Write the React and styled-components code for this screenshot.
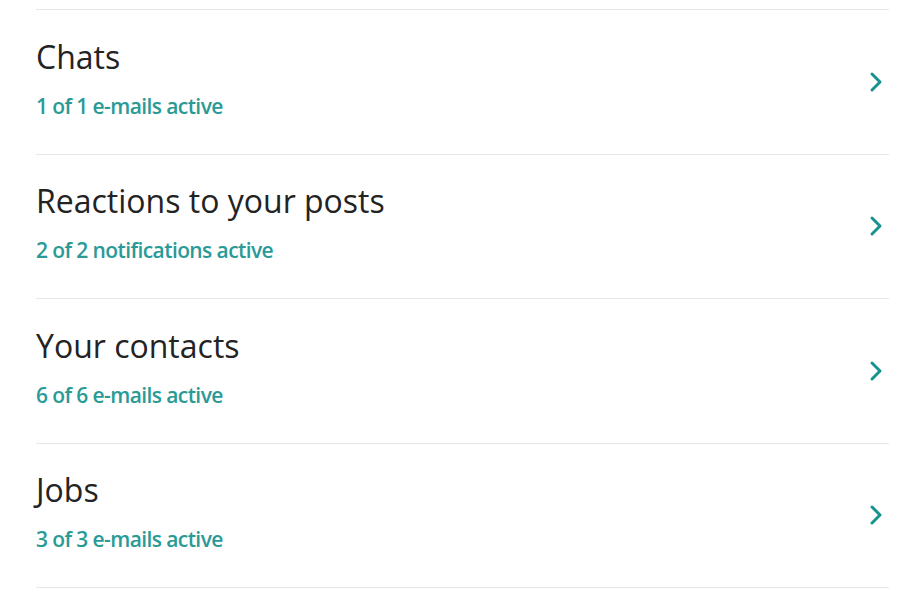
import styled, { createGlobalStyle } from 'styled-components'

const GlobalStyle = createGlobalStyle`
  body {
    margin: 0;
    background: #ffffff;
    font-family: "Open Sans", "Noto Sans", sans-serif;
  }
`

const Page = styled.div`
  padding: 9px 20px 0 36px;
`

const List = styled.ul`
  list-style: none;
  margin: 0;
  padding: 0;
  border-top: 1.5px solid #e6e6e6;
`

const Row = styled.li`
  display: flex;
  justify-content: space-between;
  align-items: center;
  box-sizing: border-box;
  height: 144.5px;
  border-bottom: 1.5px solid #e6e6e6;
  cursor: pointer;
`

const Texts = styled.div`
  display: flex;
  flex-direction: column;
  margin-top: -7px;
`

const Title = styled.span`
  font-size: 32px;
  line-height: 38px;
  color: #232323;
  letter-spacing: 0;
`

const Status = styled.span`
  margin-top: 17px;
  font-size: 21px;
  line-height: 26px;
  font-weight: 600;
  color: #2a9a97;
  letter-spacing: -0.6px;
`

const Chevron = styled.svg`
  width: 14px;
  height: 22px;
  margin-right: 6px;
  flex-shrink: 0;
`

const items = [
  { title: 'Chats', status: '1 of 1 e-mails active' },
  { title: 'Reactions to your posts', status: '2 of 2 notifications active' },
  { title: 'Your contacts', status: '6 of 6 e-mails active' },
  { title: 'Jobs', status: '3 of 3 e-mails active' },
]

function App() {
  return (
    <Page>
      <GlobalStyle />
      <List>
        {items.map((item) => (
          <Row key={item.title}>
            <Texts>
              <Title>{item.title}</Title>
              <Status>{item.status}</Status>
            </Texts>
            <Chevron viewBox="0 0 14 22">
              <path
                d="M3 3 L11 11 L3 19"
                fill="none"
                stroke="#16938f"
                strokeWidth="3"
                strokeLinecap="round"
                strokeLinejoin="round"
              />
            </Chevron>
          </Row>
        ))}
      </List>
    </Page>
  )
}

export default App
